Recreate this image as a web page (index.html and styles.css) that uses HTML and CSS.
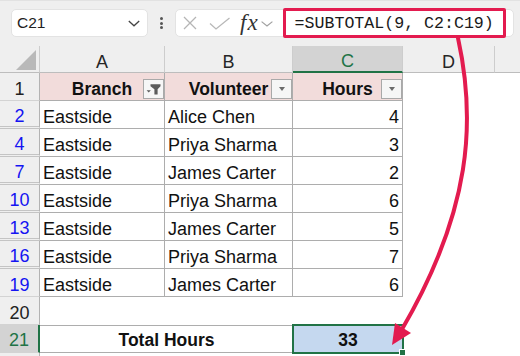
FILE: index.html
```html
<!DOCTYPE html>
<html lang="en">
<head>
<meta charset="utf-8">
<title>Subtotal</title>
<link rel="stylesheet" href="styles.css">
</head>
<body>
<div class="app">
  <div class="toolbar">
    <div class="namebox">
      <span>C21</span>
      <svg class="chev" width="12" height="7" viewBox="0 0 12 7"><polyline points="0.8,1 6,5.8 11.2,1" fill="none" stroke="#444" stroke-width="1.3"/></svg>
    </div>
    <div class="grip"><span></span><span></span><span></span></div>
    <div class="formulabar">
      <svg class="ic-x" width="14" height="14" viewBox="0 0 14 14"><path d="M1 1L13 13M13 1L1 13" stroke="#b5b5b5" stroke-width="1.3" fill="none"/></svg>
      <svg class="ic-check" width="22" height="14" viewBox="0 0 22 14"><polyline points="1,7.5 7,13 20.5,2" fill="none" stroke="#b8b8b8" stroke-width="1.3"/></svg>
      <span class="fx">fx</span>
      <svg class="ic-chev" width="12" height="6" viewBox="0 0 12 6"><polyline points="0.6,0.6 6,5 11.4,0.6" fill="none" stroke="#a0a0a0" stroke-width="1.2"/></svg>
      <div class="formula">=SUBTOTAL(9, C2:C19)</div>
    </div>
  </div>

  <div class="sheet">
    <div class="ch corner"><span class="tri"></span></div>
    <div class="ch">A</div>
    <div class="ch">B</div>
    <div class="ch sel">C</div>
    <div class="ch">D</div>
    <div class="ch last"></div>

    <div class="rh">1</div>
    <div class="c hd">Branch<span class="fbtn"><svg width="19" height="18" viewBox="0 0 19 18"><path d="M6.5 4.3H16.5V6.3L13.6 9.2V14.5H10.4V9.2L6.5 6.3Z" fill="#5b5b5b"/><path d="M2.6 10.2H6.8L4.7 12.6Z" fill="#5b5b5b"/></svg></span></div>
    <div class="c hd">Volunteer<span class="fbtn"><i class="dd"></i></span></div>
    <div class="c hd">Hours<span class="fbtn"><i class="dd"></i></span></div>
    <div class="e"></div>
    <div class="e"></div>

    <div class="rh f gap">2</div>
    <div class="c">Eastside</div>
    <div class="c">Alice Chen</div>
    <div class="c num">4</div>
    <div class="e"></div>
    <div class="e"></div>

    <div class="rh f gap">4</div>
    <div class="c">Eastside</div>
    <div class="c">Priya Sharma</div>
    <div class="c num">3</div>
    <div class="e"></div>
    <div class="e"></div>

    <div class="rh f gap">7</div>
    <div class="c">Eastside</div>
    <div class="c">James Carter</div>
    <div class="c num">2</div>
    <div class="e"></div>
    <div class="e"></div>

    <div class="rh f gap">10</div>
    <div class="c">Eastside</div>
    <div class="c">Priya Sharma</div>
    <div class="c num">6</div>
    <div class="e"></div>
    <div class="e"></div>

    <div class="rh f gap">13</div>
    <div class="c">Eastside</div>
    <div class="c">James Carter</div>
    <div class="c num">5</div>
    <div class="e"></div>
    <div class="e"></div>

    <div class="rh f gap">16</div>
    <div class="c">Eastside</div>
    <div class="c">Priya Sharma</div>
    <div class="c num">7</div>
    <div class="e"></div>
    <div class="e"></div>

    <div class="rh f">19</div>
    <div class="c">Eastside</div>
    <div class="c">James Carter</div>
    <div class="c num">6</div>
    <div class="e"></div>
    <div class="e"></div>

    <div class="rh">20</div>
    <div class="e"></div>
    <div class="e"></div>
    <div class="e"></div>
    <div class="e"></div>
    <div class="e"></div>

    <div class="rh sel">21</div>
    <div class="total">Total Hours</div>
    <div class="active">33<span class="handle"></span></div>
    <div class="e"></div>
    <div class="e"></div>

    <div class="rh"></div>
    <div class="e"></div>
    <div class="e"></div>
    <div class="e"></div>
    <div class="e"></div>
    <div class="e"></div>
  </div>

  <svg class="annot" width="520" height="356" viewBox="0 0 520 356">
    <path d="M458 38C476 120 472 210 401 331" fill="none" stroke="#e31b4f" stroke-width="4" stroke-linecap="round"/>
    <polygon points="392,345 411,333 395,323" fill="#e31b4f"/>
  </svg>
</div>
</body>
</html>
```
FILE: styles.css
```css
html, body {
  margin: 0;
  padding: 0;
  background: #ffffff;
}

body {
  font-family: "Liberation Sans", Arial, sans-serif;
  color: #111;
}

.app {
  position: relative;
  width: 520px;
  height: 356px;
  overflow: hidden;
}

/* ---------- toolbar ---------- */
.toolbar {
  height: 46px;
  box-sizing: border-box;
  background: #efefef;
  box-shadow: inset 0 1px 0 #e2e2e2;
  display: flex;
  align-items: center;
  padding-left: 11px;
}

.namebox {
  width: 137px;
  height: 28px;
  box-sizing: border-box;
  background: #fff;
  border: 1px solid #e3e3e3;
  border-radius: 5px;
  display: flex;
  align-items: center;
  justify-content: space-between;
  padding: 0 7px 0 5px;
  font-size: 15.5px;
  color: #222;
}

.grip {
  width: 27px;
  display: flex;
  flex-direction: column;
  align-items: center;
  gap: 1.5px;
}

.grip span {
  width: 3px;
  height: 3px;
  border-radius: 50%;
  background: #555;
}

.formulabar {
  width: 339px;
  height: 28px;
  box-sizing: border-box;
  background: #fff;
  border: 1px solid #e3e3e3;
  border-radius: 5px;
  display: flex;
  align-items: center;
  padding-left: 7px;
}

.ic-x { flex: none; }
.ic-check { flex: none; margin-left: 12px; }

.fx {
  font-family: "Liberation Serif", "Times New Roman", serif;
  font-style: italic;
  font-size: 23px;
  letter-spacing: 1px;
  color: #333;
  margin-left: 9px;
  line-height: 1;
  padding-bottom: 2px;
}

.ic-chev { flex: none; margin-left: 2px; margin-top: 1px; }

.formula {
  flex: none;
  width: 223px;
  height: 30px;
  box-sizing: border-box;
  margin-left: 10px;
  border: 3px solid #e31b4f;
  border-radius: 2px;
  background: #fff;
  display: flex;
  align-items: center;
  padding-left: 9px;
  font-family: "Liberation Mono", "Courier New", monospace;
  font-size: 16.6px;
  color: #1a1a1a;
  white-space: pre;
}

/* ---------- sheet ---------- */
.sheet {
  display: grid;
  grid-template-columns: 40px 125px 128px 110px 92px 25px;
  grid-template-rows: 27px repeat(10, 28px) 10px;
}

.sheet > div {
  box-sizing: border-box;
  display: flex;
  align-items: center;
  white-space: nowrap;
  overflow: hidden;
  font-size: 18px;
}

.ch {
  background: #efefef;
  border-right: 1px solid #cdcdcd;
  border-bottom: 1px solid #bdbdbd;
  justify-content: center;
  color: #262626;
  padding-top: 6px;
}

.ch.last { border-right: none; }

.ch.sel {
  background: #d3d3d3;
  color: #217346;
  border-bottom: 2px solid #217346;
}

.sheet > .corner {
  justify-content: flex-end;
  align-items: flex-end;
  padding: 0 3px 2px 0;
}

.tri {
  width: 20px;
  height: 20px;
  background: #b9b9b9;
  clip-path: polygon(100% 0, 100% 100%, 0 100%);
}

.rh {
  background: #efefef;
  border-right: 1px solid #b3b3b3;
  border-bottom: 1px solid #d3d3d3;
  justify-content: center;
  padding-top: 5px;
  color: #222;
}

.rh.f { color: #1414f2; }

.rh.gap { border-bottom: 3px double #c4c4c4; }

.rh.sel {
  background: #d3d3d3;
  color: #217346;
  border-right: 2px solid #217346;
  padding-top: 4px;
}

.c {
  border-right: 1px solid #adadad;
  border-bottom: 1px solid #adadad;
  padding: 5px 3px 0 3px;
  color: #111;
}

.sheet > .num { justify-content: flex-end; }

.sheet > .hd {
  position: relative;
  background: #f2dcdb;
  font-weight: bold;
  font-size: 17.5px;
  justify-content: center;
  overflow: visible;
}

.fbtn {
  position: absolute;
  right: 0;
  top: 6px;
  width: 21px;
  height: 20px;
  box-sizing: border-box;
  border: 1px solid #a9a9a9;
  background: #f6f6f6;
  display: flex;
  align-items: center;
  justify-content: center;
}

.fbtn svg {
  position: absolute;
  left: 0;
  top: 0;
}

.dd {
  width: 0;
  height: 0;
  border-left: 3.5px solid transparent;
  border-right: 3.5px solid transparent;
  border-top: 4px solid #6b6b6b;
}

.sheet > .total {
  grid-column: span 2;
  border-top: 1px solid #adadad;
  border-bottom: 1px solid #adadad;
  justify-content: center;
  font-weight: bold;
  font-size: 17.5px;
  padding-top: 3px;
}

.sheet > .active {
  position: relative;
  z-index: 2;
  overflow: visible;
  background: #c5d8ef;
  outline: 2px solid #217346;
  outline-offset: -1px;
  justify-content: center;
  font-weight: bold;
  font-size: 17.5px;
  padding-top: 3px;
}

.handle {
  position: absolute;
  right: -3px;
  bottom: -3px;
  width: 5px;
  height: 5px;
  background: #217346;
  border: 1px solid #fff;
}

.annot {
  position: absolute;
  left: 0;
  top: 0;
  pointer-events: none;
  z-index: 5;
}
```
